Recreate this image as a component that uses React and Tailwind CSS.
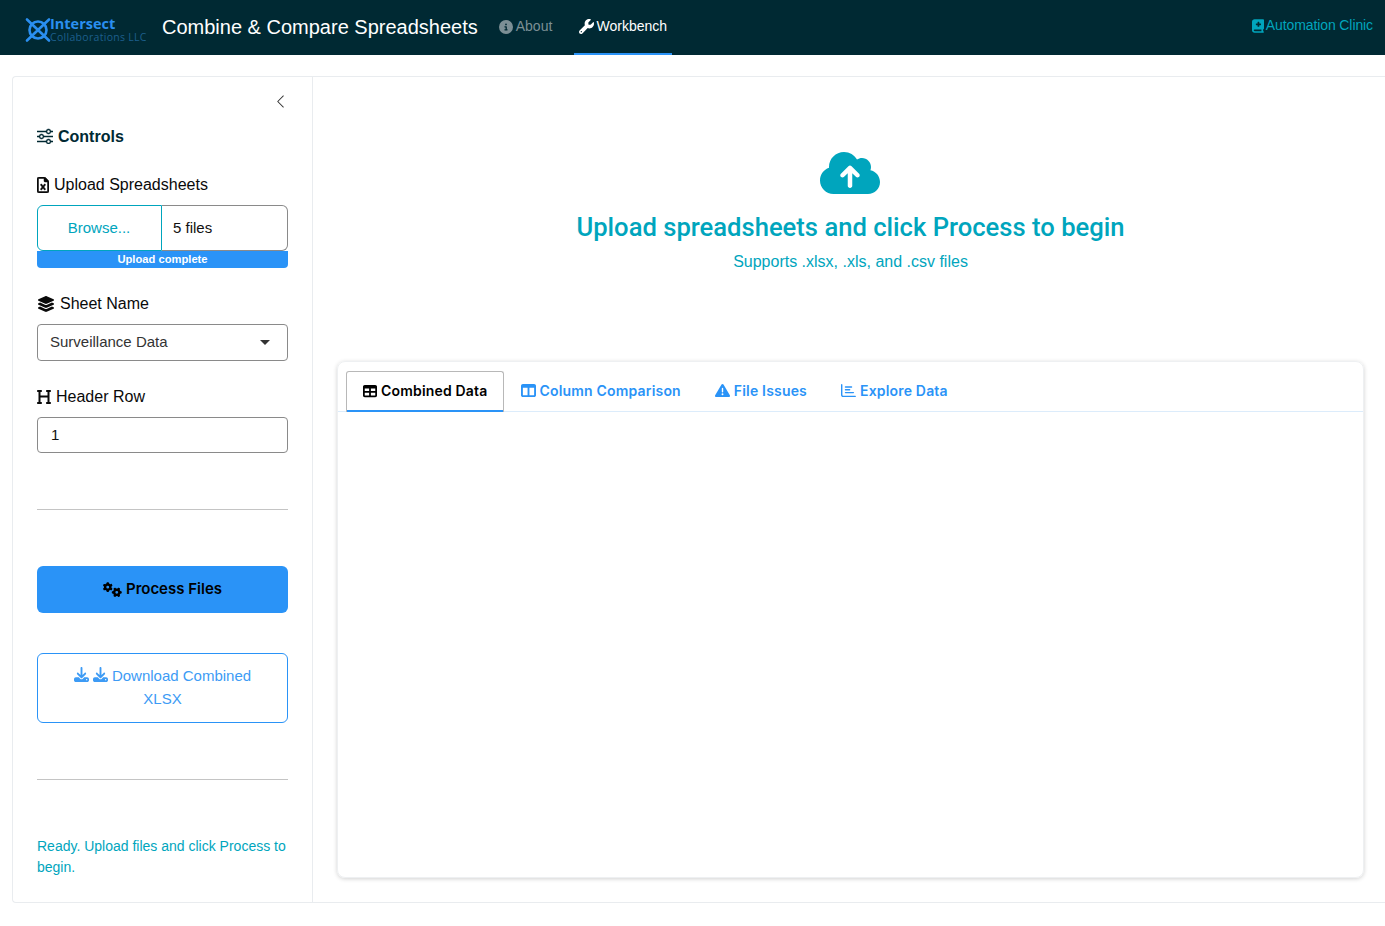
import React from "react";
import {
  FaBookMedical,
  FaCircleInfo,
  FaCloudArrowUp,
  FaDownload,
  FaGears,
  FaHeading,
  FaLayerGroup,
  FaRegChartBar,
  FaRegFileExcel,
  FaTable,
  FaTableColumns,
  FaTriangleExclamation,
  FaWrench,
} from "react-icons/fa6";
import { BsChevronLeft, BsSliders } from "react-icons/bs";

const Logo = () => (
  <div className="flex items-center w-[122px] mt-[4px] text-[#2a8ff0]">
    <svg width="26" height="26" viewBox="0 0 26 26" fill="none" stroke="currentColor" strokeWidth="2.6" strokeLinecap="round" className="shrink-0">
      <circle cx="13" cy="13" r="8.5" />
      <path d="M2 2.5 L24 23.5 M24 2.5 L2 23.5" />
    </svg>
    <div className="flex flex-col -ml-[1px] mt-[1px]">
      <span className="text-[14.5px] leading-[14.5px] font-bold font-['Open_Sans',sans-serif]">Intersect</span>
      <span className="text-[10.5px] leading-[12px] tracking-[0.3px] text-[#1d5f8c] whitespace-nowrap font-['Open_Sans',sans-serif]">Collaborations LLC</span>
    </div>
  </div>
);

const Header = () => (
  <header className="h-[55px] bg-[#002933] flex items-center pl-[25px] pr-3">
    <Logo />
    <h1 className="ml-[15px] mb-[2px] text-[20px] text-white whitespace-nowrap">Combine &amp; Compare Spreadsheets</h1>
    <a className="ml-[21px] mb-[2px] flex items-center gap-[3px] text-[14px] text-[#7c8f95]">
      <FaCircleInfo className="text-[14px]" />
      About
    </a>
    <a className="ml-[22px] w-[98px] h-full flex items-center justify-center gap-[3px] pr-[1px] text-[14px] text-white border-b-2 border-[#2a93f7]">
      <FaWrench className="text-[15px]" />
      Workbench
    </a>
    <a className="ml-auto mb-[4px] flex items-center gap-[2px] text-[14px] tracking-[-0.1px] text-[#00a5bd]">
      <FaBookMedical className="w-[12px] h-[14px]" />
      Automation Clinic
    </a>
  </header>
);

const FieldLabel = ({ icon, children }) => (
  <label className="flex items-center gap-[5px] text-[16px] leading-[24px] text-[#0a0a0a] mb-[8px]">
    {icon}
    {children}
  </label>
);

const Sidebar = () => (
  <aside className="w-[300px] shrink-0 border-r border-[#e9ecef] px-6 pt-[14px] flex flex-col">
    <div className="flex justify-end h-[20px] items-center">
      <BsChevronLeft className="text-[15px] text-[#333]" />
    </div>
    <h2 className="mt-[14px] flex items-center gap-[5px] text-[16px] leading-[24px] font-bold text-[#002933]">
      <BsSliders className="text-[16px] stroke-[0.5px] -mt-[2px]" />
      Controls
    </h2>
    <div className="mt-[24px]">
      <FieldLabel icon={<FaRegFileExcel className="w-[12px] h-[16px] stroke-[16px]" />}>Upload Spreadsheets</FieldLabel>
      <div className="flex h-[46px] text-[15px]">
        <div className="w-[125px] flex items-center justify-center pr-[1px] border border-[#00a5bd] rounded-l-[6px] text-[#00a5bd]">Browse...</div>
        <div className="flex-1 flex items-center pl-[11px] border border-l-0 border-[#8a8a8a] rounded-r-[6px] text-[#111]">5 files</div>
      </div>
      <div className="h-[17px] bg-[#2a93f7] rounded-b-[4px] flex items-center justify-center text-[11.2px] font-bold text-white">Upload complete</div>
    </div>
    <div className="mt-[24px]">
      <FieldLabel icon={<FaLayerGroup className="w-[18px] h-[16px]" />}>Sheet Name</FieldLabel>
      <div className="h-[37px] border border-[#8a8a8a] rounded-[4px] flex items-center justify-between pl-3 pr-[17px] text-[15px] text-[#333]">
        Surveillance Data
        <span className="w-0 h-0 border-x-[5px] border-x-transparent border-t-[5px] border-t-[#333]" />
      </div>
    </div>
    <div className="mt-[24px]">
      <FieldLabel icon={<FaHeading className="w-[14px] h-[16px]" />}>Header Row</FieldLabel>
      <div className="h-[36px] border border-[#8a8a8a] rounded-[4px] flex items-center pl-[13px] text-[15px] text-[#111]">1</div>
    </div>
    <hr className="mt-[56px] border-[#c4c4c4]" />
    <button className="mt-[56px] h-[47px] rounded-[6px] bg-[#2a93f7] flex items-center justify-center gap-[4px] text-[15px] font-semibold text-black font-['Inter',sans-serif]">
      <FaGears className="text-[19px]" />
      Process Files
    </button>
    <button className="mt-[40px] h-[70px] pb-[2px] rounded-[6px] border border-[#2a93f7] text-[#3d9bf5] text-[15px] leading-[23px] px-6">
      <FaDownload className="inline text-[15px] mr-[4px] align-[-1px]" />
      <FaDownload className="inline text-[15px] mr-[4px] align-[-1px]" />
      Download Combined XLSX
    </button>
    <hr className="mt-[56px] border-[#c4c4c4]" />
    <p className="mt-[56px] pb-[15px] text-[14px] leading-[21px] text-[#00a5bd]">
      Ready. Upload files and click Process to begin.
    </p>
  </aside>
);

const tabs = [
  { label: "Column Comparison", Icon: FaTableColumns },
  { label: "File Issues", Icon: FaTriangleExclamation },
  { label: "Explore Data", Icon: FaRegChartBar },
];

const TabCard = () => (
  <section className="mt-[87px] h-[517px] rounded-[8px] border border-[#eef0f2] shadow-[0_1px_4px_rgba(0,0,0,0.18)] flex flex-col">
    <nav className="h-[50px] pl-[8px] pt-[9px] flex border-b border-[#dcecfb] text-[14px] tracking-[0.18px] font-semibold font-['Inter',sans-serif]">
      <div className="h-[41px] pl-4 pr-[15px] pb-[3px] flex items-center gap-[4px] border border-b-0 border-[#b8b8b8] rounded-t-[3px] shadow-[inset_0_-2px_0_#2a93f7] text-black">
        <FaTable className="text-[14px]" />
        Combined Data
      </div>
      {tabs.map(({ label, Icon }) => (
        <div key={label} className="h-[41px] px-[17px] pb-[2px] flex items-center gap-[4px] text-[#2a93f7]">
          <Icon className="text-[15px]" />
          {label}
        </div>
      ))}
    </nav>
    <div className="flex-1" />
  </section>
);

const Main = () => (
  <main className="flex-1 min-w-0 pl-6 pr-[21px] pt-[72px] flex flex-col">
    <div className="flex flex-col items-center text-[#00a5bd]">
      <FaCloudArrowUp className="text-[60px] h-[48px] -ml-[2px]" />
      <h2 className="mt-[15px] text-[25.6px] leading-[30px] font-medium font-['Roboto',sans-serif] whitespace-nowrap">
        Upload spreadsheets and click Process to begin
      </h2>
      <p className="mt-[8px] text-[16px] leading-[24px]">Supports .xlsx, .xls, and .csv files</p>
    </div>
    <TabCard />
  </main>
);

export default function App() {
  return (
    <div className="min-h-[926px] bg-white font-['Liberation_Sans',Arial,sans-serif] overflow-hidden">
      <Header />
      <div className="mt-[21px] ml-3 h-[827px] flex border border-r-0 border-[#e9ecef] rounded-l-[4px]">
        <Sidebar />
        <Main />
      </div>
    </div>
  );
}
